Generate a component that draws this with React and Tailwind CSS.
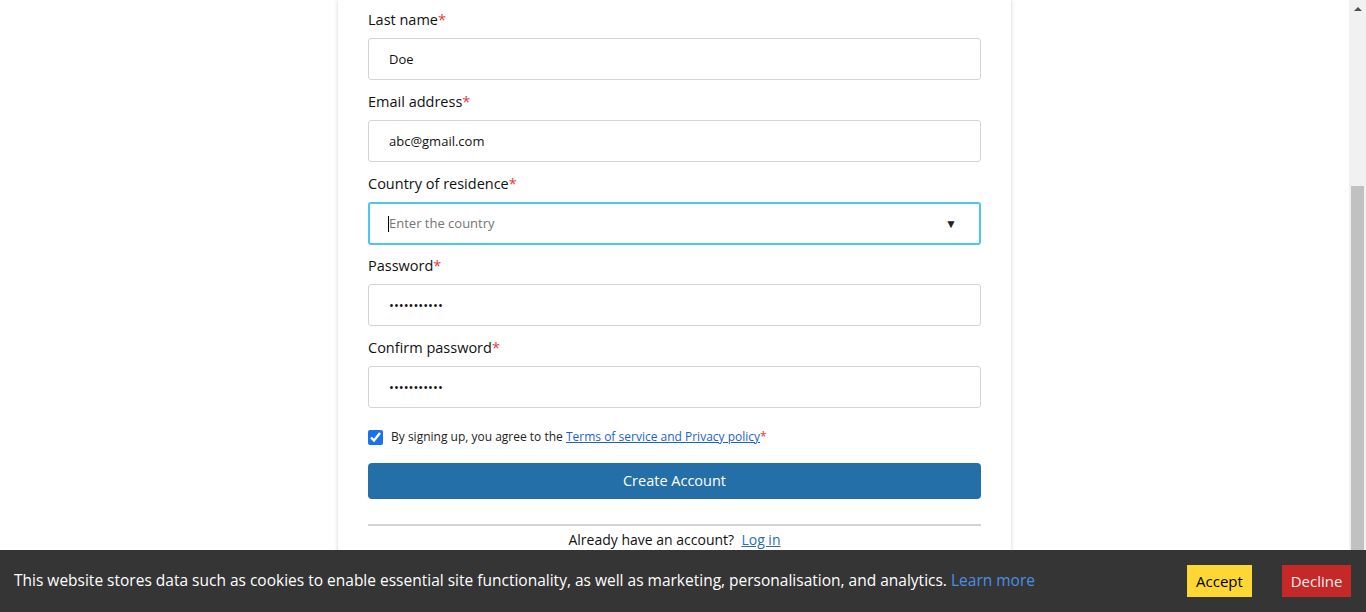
import React from 'react';

const font = { fontFamily: '"Open Sans", "Noto Sans", sans-serif' };

function Label({ children }) {
  return (
    <label className="block text-[14.5px] leading-[21px] text-[#111] mb-2">
      {children}
      <span className="text-[#e53935]">*</span>
    </label>
  );
}

function Field({ label, value, type = 'text' }) {
  return (
    <div className="mb-[11px]">
      <Label>{label}</Label>
      <input
        type={type}
        defaultValue={value}
        readOnly
        className="block w-full h-[42px] rounded-[3px] border border-[#d4d4d4] px-5 text-[13px] text-[#111] outline-none bg-white"
      />
    </div>
  );
}

export default function App() {
  return (
    <div className="relative flex h-[612px] w-full overflow-hidden bg-white" style={font}>
      {/* page */}
      <div className="flex-1 flex justify-center">
        <div className="w-[673px] h-full bg-white shadow-[0_0_4px_rgba(0,0,0,0.18)] px-[30px] pt-[9px]">
          <Field label="Last name" value="Doe" />
          <Field label="Email address" value="abc@gmail.com" />

          <div className="mb-[10px]">
            <Label>Country of residence</Label>
            <div className="flex items-center h-[43px] rounded-[3px] border-2 border-[#4ec5f1] pl-[18px] pr-[22px]">
              <span className="w-px h-[16px] bg-black" />
              <span className="flex-1 text-[13px] text-[#757575]">Enter the country</span>
              <span className="text-[12px] text-[#222]">▼</span>
            </div>
          </div>

          <Field label="Password" value="abcdefghijk" type="password" />
          <Field label="Confirm password" value="abcdefghijk" type="password" />

          <div className="flex items-center gap-2 mt-[19px] h-[20px]">
            <input type="checkbox" defaultChecked className="w-[15px] h-[15px] m-0 accent-[#1a73e8]" />
            <span className="text-[12px] text-[#222]">
              By signing up, you agree to the{' '}
              <a href="#" className="text-[#1a5fd6] underline">Terms of service and Privacy policy</a>
              <span className="text-[#e53935]">*</span>
            </span>
          </div>

          <button className="mt-[16px] w-full h-[36px] rounded-[4px] bg-[#246fa8] text-white text-[14.5px]">
            Create Account
          </button>

          <div className="mt-[25px] border-t-2 border-[#d3d3d3]" />
          <p className="text-center text-[14px] text-[#111] leading-[28px]">
            Already have an account?&nbsp;&nbsp;
            <a href="#" className="text-[#2a6fad] underline">Log in</a>
          </p>
        </div>
      </div>

      {/* scrollbar */}
      <div className="w-[17px] h-full bg-[#f1f1f1] flex flex-col items-center">
        <div className="h-[17px] flex items-center justify-center">
          <div className="w-0 h-0 border-l-[4px] border-r-[4px] border-b-[4px] border-l-transparent border-r-transparent border-b-[#505050]" />
        </div>
        <div className="mt-[169px] w-[13px] flex-1 bg-[#c1c1c1]" />
      </div>

      {/* cookie bar */}
      <div className="absolute left-0 right-0 bottom-0 h-[62px] bg-[#353535] flex items-center pl-[14px] pr-[15px]">
        <p className="flex-1 text-[15.5px] text-white">
          This website stores data such as cookies to enable essential site functionality, as well as marketing, personalisation, and analytics.{' '}
          <a href="#" className="text-[#4a90e2]">Learn more</a>
        </p>
        <button className="h-[32px] w-[65px] bg-[#fdd835] text-black text-[15px]">Accept</button>
        <button className="ml-[30px] h-[32px] w-[69px] bg-[#c62828] text-[#eee] text-[15px]">Decline</button>
      </div>
    </div>
  );
}
